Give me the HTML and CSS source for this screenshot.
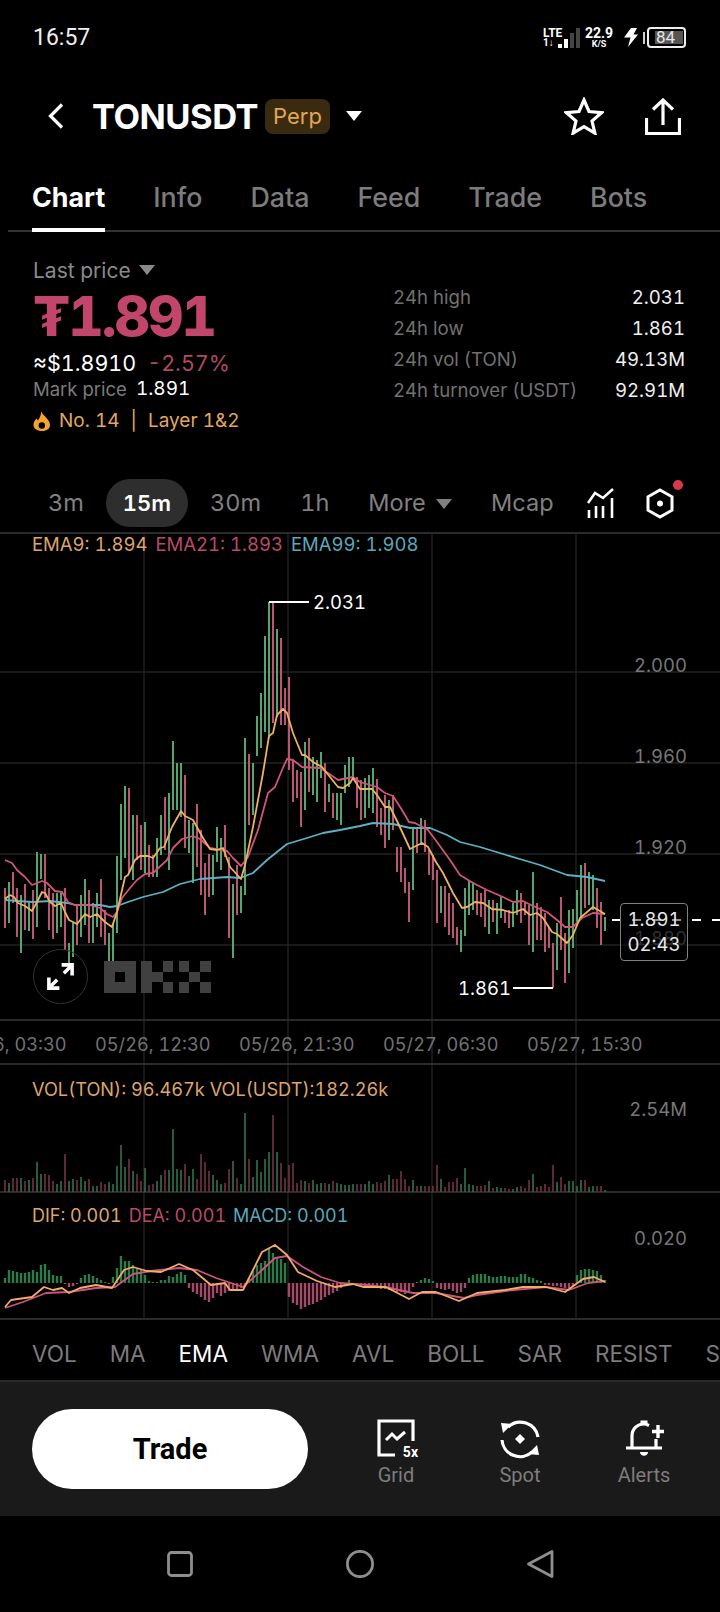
FILE: index.html
```html
<!DOCTYPE html>
<html lang="en">
<head>
  <meta charset="UTF-8" />
  <meta name="viewport" content="width=device-width, initial-scale=1.0"/>
  <title>TONUSDT Perp</title>
  <link rel="stylesheet" href="styles.css">
</head>
<body>

  <div class="status-bar">
    <span class="clock">16:57</span>
    <div class="status-right">
      <div class="net">
        <span class="lte">LTE</span>
        <span class="arrows">1↓</span>
      </div>
      <div class="signal">
        <i class="s1"></i><i class="s2"></i><i class="s3"></i><i class="s4"></i>
      </div>
      <div class="speed"><span>22.9</span><small>K/S</small></div>
      <svg class="bolt" width="14" height="19" viewBox="0 0 14 19"><path d="M7 0h6L9.500 6.500H14L4 19l2.500-9.500H0z" fill="#fff"/></svg>
      <div class="battery-tip"></div>
      <div class="battery"><span>84</span></div>
    </div>
  </div>

  <div class="top-bar">
    <svg class="back" width="16" height="26" viewBox="0 0 16 26"><path d="M14 1.500L2.500 13 14 24.500" fill="none" stroke="#fff" stroke-width="3.200"/></svg>
    <span class="symbol">TONUSDT</span>
    <span class="perp">Perp</span>
    <span class="tri tri-white"></span>
    <svg class="star" width="40" height="38" viewBox="0 0 40 38"><path d="M20 3l5 11.500 12.500 1.200-9.500 8.300 2.900 12.200L20 29.700 9.100 36.200 12 24 2.500 15.700 15 14.500z" fill="none" stroke="#fff" stroke-width="3.200"/></svg>
    <svg class="share" width="36" height="37" viewBox="0 0 36 37"><path d="M1.500 20v15.500h33V20M18 27V2.500M8 11.500l10-9.500 10 9.500" fill="none" stroke="#fff" stroke-width="3.200"/></svg>
  </div>

  <div class="tabs">
    <span class="tab active">Chart</span>
    <span class="tab">Info</span>
    <span class="tab">Data</span>
    <span class="tab">Feed</span>
    <span class="tab">Trade</span>
    <span class="tab">Bots</span>
  </div>

  <div class="market">
    <div class="market-left">
      <div class="last-label">Last price <span class="tri tri-gray"></span></div>
      <div class="last-price">₮1.891</div>
      <div class="fiat"><span>≈$1.8910</span><span class="change">-2.57%</span></div>
      <div class="mark"><span>Mark price</span><b>1.891</b></div>
      <div class="rank">
        <svg width="18" height="20" viewBox="0 0 18 20"><path d="M8 0c1 3 3 4 5 6.500 2 2.500 4 4.500 4 7.500 0 3.500-3 6-8 6s-8.500-2.500-8.500-6c0-3 1.500-5 3-6.500L5 9.500C6.500 7 8.500 4 8 0z" fill="#f5a32e"/><circle cx="8.800" cy="14.500" r="3.200" fill="#000"/></svg>
        <span>No. 14</span><span class="sep">|</span><span>Layer 1&amp;2</span>
      </div>
    </div>
    <div class="stats">
      <span>24h high</span><b>2.031</b>
      <span>24h low</span><b>1.861</b>
      <span>24h vol (TON)</span><b>49.13M</b>
      <span>24h turnover (USDT)</span><b>92.91M</b>
    </div>
  </div>

  <div class="intervals">
    <span class="iv">3m</span>
    <span class="iv active">15m</span>
    <span class="iv">30m</span>
    <span class="iv">1h</span>
    <span class="iv">More <span class="tri tri-dim"></span></span>
    <span class="iv">Mcap</span>
    <svg class="iv-icon" width="28" height="30" viewBox="0 0 28 30"><path d="M1 15l7-10 8 5L26 1M2 22v8M9 18v12M16 18v12M25 10v20" fill="none" stroke="#fff" stroke-width="2.600"/></svg>
    <div class="settings">
      <svg width="28" height="31" viewBox="0 0 28 31"><path d="M14 2l12 6.800v13.400L14 29 2 22.200V8.800z" fill="none" stroke="#fff" stroke-width="3"/><circle cx="14" cy="15.500" r="3" fill="#fff"/></svg>
      <i class="dot"></i>
    </div>
  </div>

  <div class="chart">
    <svg id="chartSvg" class="chart-svg" width="720" height="790" viewBox="0 532 720 790"></svg>

    <div class="legend ema-legend">
      <span class="c-orange">EMA9: 1.894</span>
      <span class="c-pink">EMA21: 1.893</span>
      <span class="c-teal">EMA99: 1.908</span>
    </div>

    <span class="axis y-2000">2.000</span>
    <span class="axis y-1960">1.960</span>
    <span class="axis y-1920">1.920</span>
    <span class="axis y-1880">1.880</span>

    <span class="extreme high">2.031</span>
    <span class="extreme low">1.861</span>

    <div class="price-tag"><span>1.891</span><span>02:43</span></div>

    <div class="expand">
      <svg width="31" height="31" viewBox="0 0 28 28"><path d="M4 24l7-7M17 11l7-7M15 3.500h9.500V13M3.500 15v9.500H13" fill="none" stroke="#fff" stroke-width="3.200"/></svg>
    </div>
    <svg class="okx-mark" width="107" height="32" viewBox="0 0 107 32">
      <path d="M0 0h32v32H0zM11 11v10h10V11z" fill-rule="evenodd" fill="#404040"/>
      <path d="M37 0h11v32H37zM48 11h11v10H48zM59 0h10v11H59zM59 21h10v11H59zM75 0h10v11H75zM96 0h11v11H96zM85 11h11v10H85zM75 21h10v11H75zM96 21h11v11H96z" fill="#404040"/>
    </svg>

    <div class="dates">
      <span>05/26, 03:30</span>
      <span>05/26, 12:30</span>
      <span>05/26, 21:30</span>
      <span>05/27, 06:30</span>
      <span>05/27, 15:30</span>
    </div>

    <div class="legend vol-legend c-orange">VOL(TON): 96.467k VOL(USDT):182.26k</div>
    <span class="axis y-vol">2.54M</span>

    <div class="legend macd-legend">
      <span class="c-orange">DIF: 0.001</span>
      <span class="c-pink">DEA: 0.001</span>
      <span class="c-teal">MACD: 0.001</span>
    </div>
    <span class="axis y-macd">0.020</span>
  </div>

  <div class="indicators">
    <span>VOL</span>
    <span>MA</span>
    <span class="active">EMA</span>
    <span>WMA</span>
    <span>AVL</span>
    <span>BOLL</span>
    <span>SAR</span>
    <span>RESIST</span>
    <span>S</span>
  </div>

  <div class="action-bar">
    <button class="trade-btn">Trade</button>
    <div class="action">
      <div class="action-icon grid-icon">
        <svg width="38" height="38" viewBox="0 0 38 38"><path d="M18 36H2V2h34v20" fill="none" stroke="#fff" stroke-width="3.200"/><path d="M9 21l6-6 5 5 8-7" fill="none" stroke="#fff" stroke-width="3"/></svg>
        <b>5x</b>
      </div>
      <span>Grid</span>
    </div>
    <div class="action">
      <div class="action-icon">
        <svg width="42" height="40" viewBox="0 0 42 40"><path d="M9 8A18 18 0 0 1 39 18M3 21a18 18 0 0 0 30 12" fill="none" stroke="#fff" stroke-width="3.200"/><path d="M2 4l11 1-9 9zM40 36l-11-1 9-9z" fill="#fff"/><path d="M21 15l5 5-5 5-5-5z" fill="#fff"/></svg>
      </div>
      <span>Spot</span>
    </div>
    <div class="action">
      <div class="action-icon">
        <svg width="42" height="40" viewBox="0 0 42 40"><path d="M3 29h36M9 29V17c0-7 5-12 12-12 2 0 3 .5 5 1.500M33 20v9" fill="none" stroke="#fff" stroke-width="3.200"/><path d="M35 6v13M29 12.500h12" fill="none" stroke="#fff" stroke-width="3.400"/><path d="M17.500 1.500h7v4h-7zM17 33h8c0 5-8 5-8 0z" fill="#fff"/></svg>
      </div>
      <span>Alerts</span>
    </div>
  </div>

  <div class="nav-bar">
    <svg width="28" height="28" viewBox="0 0 28 28"><rect x="2.500" y="2.500" width="23" height="23" rx="3" fill="none" stroke="#8e8e8e" stroke-width="2.800"/></svg>
    <svg width="30" height="30" viewBox="0 0 30 30"><circle cx="15" cy="15" r="12.600" fill="none" stroke="#8e8e8e" stroke-width="2.800"/></svg>
    <svg width="28" height="30" viewBox="0 0 28 30"><path d="M26 2.500v25L2.500 15z" fill="none" stroke="#8e8e8e" stroke-width="2.800" stroke-linejoin="round"/></svg>
  </div>

  <script src="chart.js"></script>
</body>
</html>
```

FILE: styles.css
```css
* {
  box-sizing: border-box;
}

body {
  font-family: Inter, "Liberation Sans", sans-serif;
  font-variant-numeric: tabular-nums;
  margin: 0;
  padding: 0;
  width: 720px;
  height: 1612px;
  overflow: hidden;
  background-color: #000;
  color: #fff;
}

/* status bar */
.status-bar {
  height: 72px;
  padding: 3px 33px 0;
  display: flex;
  justify-content: space-between;
  align-items: center;
  font-family: Roboto, sans-serif;
}

.clock {
  font-size: 23px;
  color: #eee;
}

.status-right {
  display: flex;
  align-items: center;
  height: 24px;
  margin-right: 1px;
}

.net {
  display: flex;
  flex-direction: column;
  width: 15px;
  font-weight: 700;
  line-height: 10px;
}

.lte {
  font-size: 12px;
}

.arrows {
  font-size: 10px;
}

.signal {
  display: flex;
  align-items: flex-end;
  gap: 2.500px;
  height: 20px;
  width: 26px;
}

.signal i {
  width: 3.500px;
  background-color: #fff;
}

.signal .s1 { height: 4px; }
.signal .s2 { height: 9px; }
.signal .s3 { height: 15px; background-color: #444; }
.signal .s4 { height: 20px; background-color: #444; }

.speed {
  width: 30px;
  display: flex;
  flex-direction: column;
  align-items: center;
  font-weight: 700;
  font-size: 14px;
  line-height: 13px;
  margin-right: 10px;
}

.speed small {
  font-size: 9px;
  line-height: 9px;
}

.bolt {
  margin-right: 5px;
}

.battery-tip {
  width: 2px;
  height: 12px;
  background-color: #ccc;
  margin-right: 2px;
}

.battery {
  width: 39px;
  height: 21px;
  border: 2px solid #eee;
  border-radius: 4px;
  padding: 2px 1px 2px 6px;
  display: flex;
}

.battery span {
  flex: 1;
  background-color: #555;
  color: #e6e6e6;
  font-size: 17px;
  line-height: 13px;
  padding-left: 1px;
}

/* symbol header */
.top-bar {
  height: 88px;
  display: flex;
  align-items: center;
  padding-left: 48px;
}

.symbol {
  font-size: 34.500px;
  font-weight: 700;
  margin-left: 28px;
  letter-spacing: -0.5px;
}

.perp {
  margin-left: 7px;
  height: 35px;
  width: 65px;
  text-align: center;
  line-height: 35px;
  background-color: #3a2a10;
  color: #e3a653;
  border-radius: 8px;
  font-size: 22px;
}

.tri {
  display: inline-block;
  width: 0;
  height: 0;
  border-left: 8px solid transparent;
  border-right: 8px solid transparent;
  border-top: 10px solid #fff;
}

.tri-white {
  margin-left: 16px;
}

.star {
  margin-left: auto;
  margin-right: 41px;
}

.share {
  margin-right: 39px;
}

/* tabs */
.tabs {
  height: 72px;
  margin-left: 8px;
  padding-left: 24px;
  display: flex;
  gap: 48px;
  border-bottom: 2px solid #333;
}

.tab {
  font-size: 26.800px;
  line-height: 74px;
  height: 72px;
  color: #7c7c7c;
  font-weight: 500;
}

.tab.active {
  color: #fff;
  font-weight: 700;
  border-bottom: 4px solid #fff;
}

/* price block */
.market {
  height: 247px;
  padding: 25px 35px 0 33px;
  display: flex;
  justify-content: space-between;
}

.last-label {
  font-size: 21px;
  line-height: 28px;
  color: #8a8a8a;
}

.tri-gray {
  margin-left: 3px;
  vertical-align: 3px;
  border-top-color: #8a8a8a;
}

.last-price {
  font-size: 55px;
  font-weight: 800;
  line-height: 62px;
  letter-spacing: -2px;
  color: #c2466c;
  margin-bottom: 3px;
}

.fiat {
  font-size: 21.500px;
  line-height: 26px;
  display: flex;
  gap: 11px;
}

.change {
  color: #b04a63;
}

.mark {
  font-size: 18.500px;
  line-height: 26px;
  color: #7c7c7c;
  display: flex;
  gap: 9px;
}

.mark b {
  color: #fff;
  font-weight: 400;
  font-size: 19px;
}

.rank {
  margin-top: 4px;
  font-size: 19px;
  line-height: 30px;
  color: #e0a860;
  display: flex;
  align-items: center;
  gap: 8px;
}

.rank .sep {
  margin: 0 3px;
}

.stats {
  width: 292px;
  padding-top: 25px;
  display: grid;
  grid-template-columns: 1fr auto;
  grid-auto-rows: 31px;
  align-content: start;
  font-size: 18.600px;
  line-height: 31px;
  color: #717171;
}

.stats b {
  text-align: right;
  font-weight: 400;
  color: #f0f0f0;
}

/* intervals */
.intervals {
  height: 53px;
  padding-left: 31px;
  display: flex;
  align-items: flex-start;
  gap: 5px;
}

.iv {
  height: 48px;
  padding: 0 17px;
  line-height: 48px;
  font-size: 23.500px;
  color: #808080;
  white-space: nowrap;
}

.iv.active {
  background-color: #2e2e2e;
  color: #fff;
  font-size: 22px;
  font-weight: 600;
  border-radius: 24px;
}

.tri-dim {
  margin-left: 4px;
  border-top-color: #808080;
  vertical-align: 2px;
}

.iv-icon {
  margin: 9px 26px 0 11px;
}

.settings {
  position: relative;
  margin-top: 9px;
}

.settings .dot {
  position: absolute;
  right: -9px;
  top: -8px;
  width: 10px;
  height: 10px;
  border-radius: 50%;
  background-color: #d8394a;
}

/* chart canvas */
.chart {
  position: relative;
  height: 790px;
  overflow: hidden;
}

.chart-svg {
  position: absolute;
  left: 0;
  top: 0;
}

.legend {
  position: absolute;
  left: 32px;
  font-size: 18.500px;
  line-height: 24px;
  white-space: nowrap;
  display: flex;
  gap: 8px;
}

.ema-legend { top: 0; }
.vol-legend { top: 545px; font-size: 18.200px; }
.macd-legend { top: 672px; gap: 7px; font-size: 18px; }

.c-orange { color: #dfa46d; }
.c-pink { color: #b94a6b; }
.c-teal { color: #58a9bb; }

.axis {
  position: absolute;
  right: 33px;
  font-size: 18.500px;
  line-height: 24px;
  color: #777;
}

.y-2000 { top: 121px; }
.y-1960 { top: 212px; }
.y-1920 { top: 303px; }
.y-1880 { top: 394px; color: #555; }
.y-vol { top: 565px; }
.y-macd { top: 694px; }

.extreme {
  position: absolute;
  font-size: 18.500px;
  line-height: 24px;
  color: #fff;
}

.high { left: 313px; top: 58px; }
.low { left: 458px; top: 444px; }

.price-tag {
  position: absolute;
  left: 620px;
  top: 371px;
  width: 68px;
  height: 58px;
  border: 1.500px solid #808080;
  border-radius: 4px;
  background-color: rgba(0, 0, 0, 0.45);
  display: flex;
  flex-direction: column;
  align-items: center;
  padding-top: 3px;
  font-size: 18.500px;
  line-height: 25px;
  color: #e8e8e8;
}

.expand {
  position: absolute;
  left: 33px;
  top: 417px;
  width: 55px;
  height: 55px;
  border: 1.500px solid #333;
  border-radius: 50%;
  display: flex;
  align-items: center;
  justify-content: center;
}

.okx-mark {
  position: absolute;
  left: 104px;
  top: 429px;
}

.dates {
  position: absolute;
  top: 500px;
  left: -49px;
  display: flex;
  font-size: 18.200px;
  line-height: 24px;
  color: #717171;
  white-space: nowrap;
}

.dates span {
  width: 144px;
}

/* indicator strip */
.indicators {
  height: 58px;
  padding-left: 32px;
  display: flex;
  gap: 33px;
  font-size: 22.500px;
  line-height: 64px;
  color: #7c7c7c;
  white-space: nowrap;
  overflow: hidden;
}

.indicators .active {
  color: #fff;
}

/* bottom actions */
.action-bar {
  height: 136px;
  background-color: #1a1a1a;
  border-top: 2px solid #2a2a2a;
  position: relative;
  display: flex;
  align-items: center;
  padding-left: 32px;
  font-family: Roboto, sans-serif;
}

.trade-btn {
  width: 276px;
  height: 80px;
  border: none;
  border-radius: 40px;
  background-color: #fff;
  color: #000;
  font-family: Roboto, sans-serif;
  font-weight: 700;
  font-size: 29px;
  margin-right: 26px;
}

.action {
  width: 124px;
  display: flex;
  flex-direction: column;
  align-items: center;
  font-size: 20px;
  color: #7d7d7d;
  margin-top: 8px;
}

.action-icon {
  position: relative;
  height: 40px;
  margin-bottom: 4px;
}

.grid-icon b {
  position: absolute;
  right: -3px;
  bottom: 0;
  font-size: 14px;
  line-height: 14px;
  color: #fff;
  background-color: #1a1a1a;
  padding-left: 2px;
}

/* android nav */
.nav-bar {
  height: 96px;
  padding: 0 166px;
  display: flex;
  justify-content: space-between;
  align-items: center;
}
```

FILE: chart.js
```js
// y top, y bottom and side of each candle, oldest first. spacing is 4px
const candles = [
  [888,928,"r"],[882,923,"g"],[872,903,"r"],[888,937,"r"],[895,953,"g"],[884,930,"r"],[902,931,"g"],[890,939,"r"],
  [852,927,"g"],[854,879,"g"],[854,898,"r"],[888,930,"r"],[893,939,"r"],[893,933,"g"],[893,927,"g"],[888,950,"r"],
  [943,966,"g"],[923,957,"g"],[906,945,"r"],[895,937,"g"],[879,925,"g"],[890,943,"r"],[903,943,"g"],[893,927,"g"],
  [879,937,"r"],[910,945,"r"],[933,965,"g"],[923,964,"g"],[856,933,"g"],[804,880,"g"],[786,858,"g"],[788,873,"r"],
  [815,880,"g"],[815,860,"r"],[825,870,"r"],[822,873,"g"],[845,877,"r"],[855,877,"r"],[838,877,"g"],[815,855,"g"],
  [797,850,"r"],[793,870,"g"],[741,810,"g"],[763,810,"g"],[763,817,"g"],[775,848,"r"],[820,853,"g"],[823,883,"g"],
  [804,867,"r"],[830,895,"r"],[863,915,"r"],[854,897,"r"],[855,895,"g"],[827,862,"g"],[838,870,"g"],[825,857,"r"],
  [857,938,"r"],[884,958,"g"],[865,915,"r"],[886,913,"g"],[738,895,"g"],[754,825,"r"],[763,815,"g"],[716,756,"g"],
  [693,748,"g"],[636,732,"g"],[602,738,"g"],[603,723,"r"],[629,717,"g"],[638,725,"r"],[688,725,"r"],[677,770,"r"],
  [760,802,"r"],[770,798,"r"],[772,827,"r"],[742,810,"g"],[738,792,"r"],[757,795,"g"],[760,802,"g"],[752,778,"g"],
  [763,812,"r"],[784,802,"g"],[793,818,"r"],[793,820,"g"],[793,825,"g"],[765,793,"g"],[757,787,"g"],[757,780,"g"],
  [777,808,"r"],[780,820,"r"],[778,818,"g"],[775,808,"g"],[768,813,"g"],[779,827,"r"],[808,835,"r"],[795,848,"r"],
  [800,840,"g"],[795,830,"r"],[847,872,"r"],[847,882,"r"],[868,893,"r"],[882,922,"r"],[828,890,"g"],[827,853,"r"],
  [818,845,"g"],[820,852,"r"],[850,875,"r"],[855,880,"r"],[870,923,"r"],[886,913,"g"],[886,927,"r"],[893,935,"r"],
  [903,938,"r"],[927,945,"r"],[930,952,"g"],[888,936,"g"],[880,915,"g"],[882,910,"g"],[890,915,"r"],[893,917,"r"],
  [890,927,"r"],[900,934,"g"],[900,922,"r"],[903,934,"g"],[897,918,"g"],[910,923,"r"],[910,928,"r"],[903,927,"g"],
  [890,915,"g"],[893,923,"r"],[902,915,"r"],[905,945,"r"],[872,952,"g"],[903,940,"r"],[907,940,"r"],[913,952,"r"],
  [927,948,"r"],[943,988,"r"],[923,970,"g"],[897,950,"r"],[933,983,"r"],[910,973,"g"],[909,948,"g"],[890,922,"g"],
  [865,918,"g"],[863,908,"r"],[872,905,"g"],[875,910,"g"],[888,928,"r"],[902,945,"r"],[917,931,"g"]
];

const volumes = [
  12,9,14,14,14,11,12,14,30,18,18,17,11,8,11,38,11,13,12,15,11,13,6,6,10,8,10,8,26,47,25,33,21,18,11,24,7,8,11,17,
  22,22,63,23,22,28,16,23,13,38,30,21,17,12,8,9,23,31,14,8,79,33,15,32,20,33,40,77,40,29,14,27,29,9,12,11,9,12,8,9,
  9,8,11,9,8,7,7,8,8,8,8,11,8,10,9,11,17,13,13,21,13,6,12,6,6,6,6,6,27,13,5,10,10,14,8,24,8,7,6,6,7,11,4,5,4,4,3,3,
  5,6,4,12,18,5,6,8,5,27,10,15,8,11,11,6,12,12,5,6,6,6,2
];

const macdBars = [
  5,13,12,11,10,10,11,13,11,18,19,13,8,7,7,-1,-4,-3,-1,5,8,9,7,5,3,1,-1,6,15,27,22,22,18,14,13,8,2,1,1,3,3,7,6,9,11,8,
  -5,-9,-11,-14,-17,-19,-15,-10,-13,-10,-8,-7,-6,-5,-2,5,12,18,20,22,34,30,25,24,20,
  -14,-20,-22,-26,-24,-22,-21,-19,-17,-14,-12,-10,-8,-5,-2,3,
  -2,-3,-3,-4,-4,-5,-5,-6,-6,-7,-8,-9,-9,-11,-8,-4,1,3,5,4,2,-5,-6,-7,-6,-8,-10,-9,-5,
  5,8,9,9,9,7,6,6,7,7,6,6,6,9,9,6,5,3,2,-2,-2,-3,-3,-4,-5,-5,-3,8,13,14,14,13,12,8,3
];

const ema9 = "5,899 10,895 14,897 18,903 25,906 32,911 37,902 42,892 45,893 50,902 55,906 61,903 65,912 69,920 77,924 85,914 90,917 97,914 105,922 112,927 117,912 125,877 128,875 135,860 140,856 148,856 153,858 160,848 164,847 172,827 181,811 185,816 193,820 203,838 210,849 217,850 223,848 230,867 241,879 245,865 253,827 263,773 269,736 273,733 277,715 283,709 287,713 293,733 302,755 305,755 313,762 322,767 330,777 338,787 343,788 350,783 353,778 360,789 372,789 377,795 385,807 390,807 398,823 410,849 422,843 428,847 436,862 443,873 453,893 462,908 467,907 475,902 483,903 492,909 503,910 513,913 523,909 530,915 537,913 543,918 552,932 557,934 567,943 573,935 580,918 593,907 605,914";
const ema21 = "5,860 12,863 17,870 25,877 32,885 42,881 47,883 55,891 62,892 68,902 75,905 90,905 100,908 107,914 113,917 117,912 122,898 130,888 137,880 145,874 153,873 167,860 173,848 182,839 193,836 200,839 210,848 227,851 233,858 241,866 248,857 258,830 268,793 275,787 282,770 287,759 293,760 302,767 320,768 328,773 338,780 353,777 360,782 377,787 385,793 393,796 402,810 409,822 415,823 428,830 437,842 450,860 460,875 473,883 487,890 503,897 513,902 523,901 533,906 547,912 557,920 565,927 573,927 582,918 593,913 605,914";
const ema99 = "5,900 17,901 33,902 50,901 67,903 75,905 90,905 100,905 110,907 117,906 128,902 143,897 163,892 180,884 200,879 227,877 240,878 253,873 267,860 287,844 307,838 323,833 340,830 360,826 373,823 393,824 410,828 430,828 447,835 460,842 480,847 503,854 523,860 540,865 567,875 587,877 605,881";
const dif = "5,1307 11,1300 18,1299 32,1297 44,1287 53,1290 62,1288 69,1293 80,1288 96,1285 112,1288 124,1270 133,1267 147,1271 161,1272 179,1264 193,1270 211,1285 225,1283 230,1290 243,1290 262,1252 275,1245 287,1255 298,1272 317,1281 335,1287 353,1284 363,1287 386,1287 409,1299 422,1292 436,1292 459,1301 477,1293 505,1290 523,1287 546,1287 565,1292 583,1279 594,1277 605,1282";
const dea = "5,1308 23,1302 46,1293 69,1292 96,1288 115,1287 133,1274 151,1271 179,1268 197,1270 216,1278 243,1287 262,1270 275,1258 287,1256 303,1267 321,1277 340,1283 367,1285 390,1288 413,1293 436,1293 464,1298 477,1295 505,1291 546,1287 569,1290 588,1283 605,1281";

const GREEN = "#55a56c";
const RED = "#bb5672";
const ZERO_Y = 1283;
const VOL_Y = 1192;

function barsPath(list) {
  return list.map(b => `M${b.x} ${b.from}V${b.to}`).join("");
}

function drawPath(d, color, width, extra) {
  return `<path d="${d}" fill="none" stroke="${color}" stroke-width="${width}" ${extra || ""}/>`;
}

function drawLine(points, color, width) {
  return `<polyline points="${points}" fill="none" stroke="${color}" stroke-width="${width}" stroke-linejoin="round"/>`;
}

function renderChart() {
  const svg = document.getElementById("chartSvg");
  let html = "";

  // grid
  html += drawPath("M144 532V1320M288 532V1320M432 532V1320M576 532V1320", "#1f1f1f", 1.5);
  html += drawPath("M0 672H720M0 763H720M0 854H720M0 945H720", "#222", 1.5);
  html += drawPath("M0 533H720M0 1020H720M0 1064H720M0 1192H720M0 1319H720", "#2a2a2a", 2);

  // candles
  const rows = candles.map((c, i) => ({ x: 5 + 4 * i, from: c[0], to: c[1], side: c[2] }));
  html += drawPath(barsPath(rows.filter(r => r.side === "g")), GREEN, 2);
  html += drawPath(barsPath(rows.filter(r => r.side === "r")), RED, 2);

  // volume
  const vols = volumes.map((h, i) => ({ x: 5 + 4 * i, from: VOL_Y, to: VOL_Y - h, side: candles[i][2] }));
  html += drawPath(barsPath(vols.filter(r => r.side === "g")), "#2f6b44", 1.7);
  html += drawPath(barsPath(vols.filter(r => r.side === "r")), "#6e2f40", 1.7);

  // macd histogram
  const hist = macdBars.map((h, i) => ({ x: 5 + 4 * i, from: ZERO_Y, to: ZERO_Y - h, up: h > 0 }));
  html += drawPath(barsPath(hist.filter(r => r.up)), "#2f7a49", 2.4);
  html += drawPath(barsPath(hist.filter(r => !r.up)), "#a24a66", 2.4);

  // moving averages
  html += drawLine(ema99, "#5cb2c6", 1.8);
  html += drawLine(ema21, "#cf5579", 1.8);
  html += drawLine(ema9, "#ecb25f", 1.8);
  html += drawLine(dea, "#c9557a", 1.8);
  html += drawLine(dif, "#f2ab68", 1.8);

  // high, low and last price markers
  html += drawPath("M269 602H309M513 988H553", "#fff", 2);
  html += drawPath("M612 920H720", "#fff", 2, 'stroke-dasharray="9 11"');

  svg.innerHTML = html;
}

renderChart();
```
